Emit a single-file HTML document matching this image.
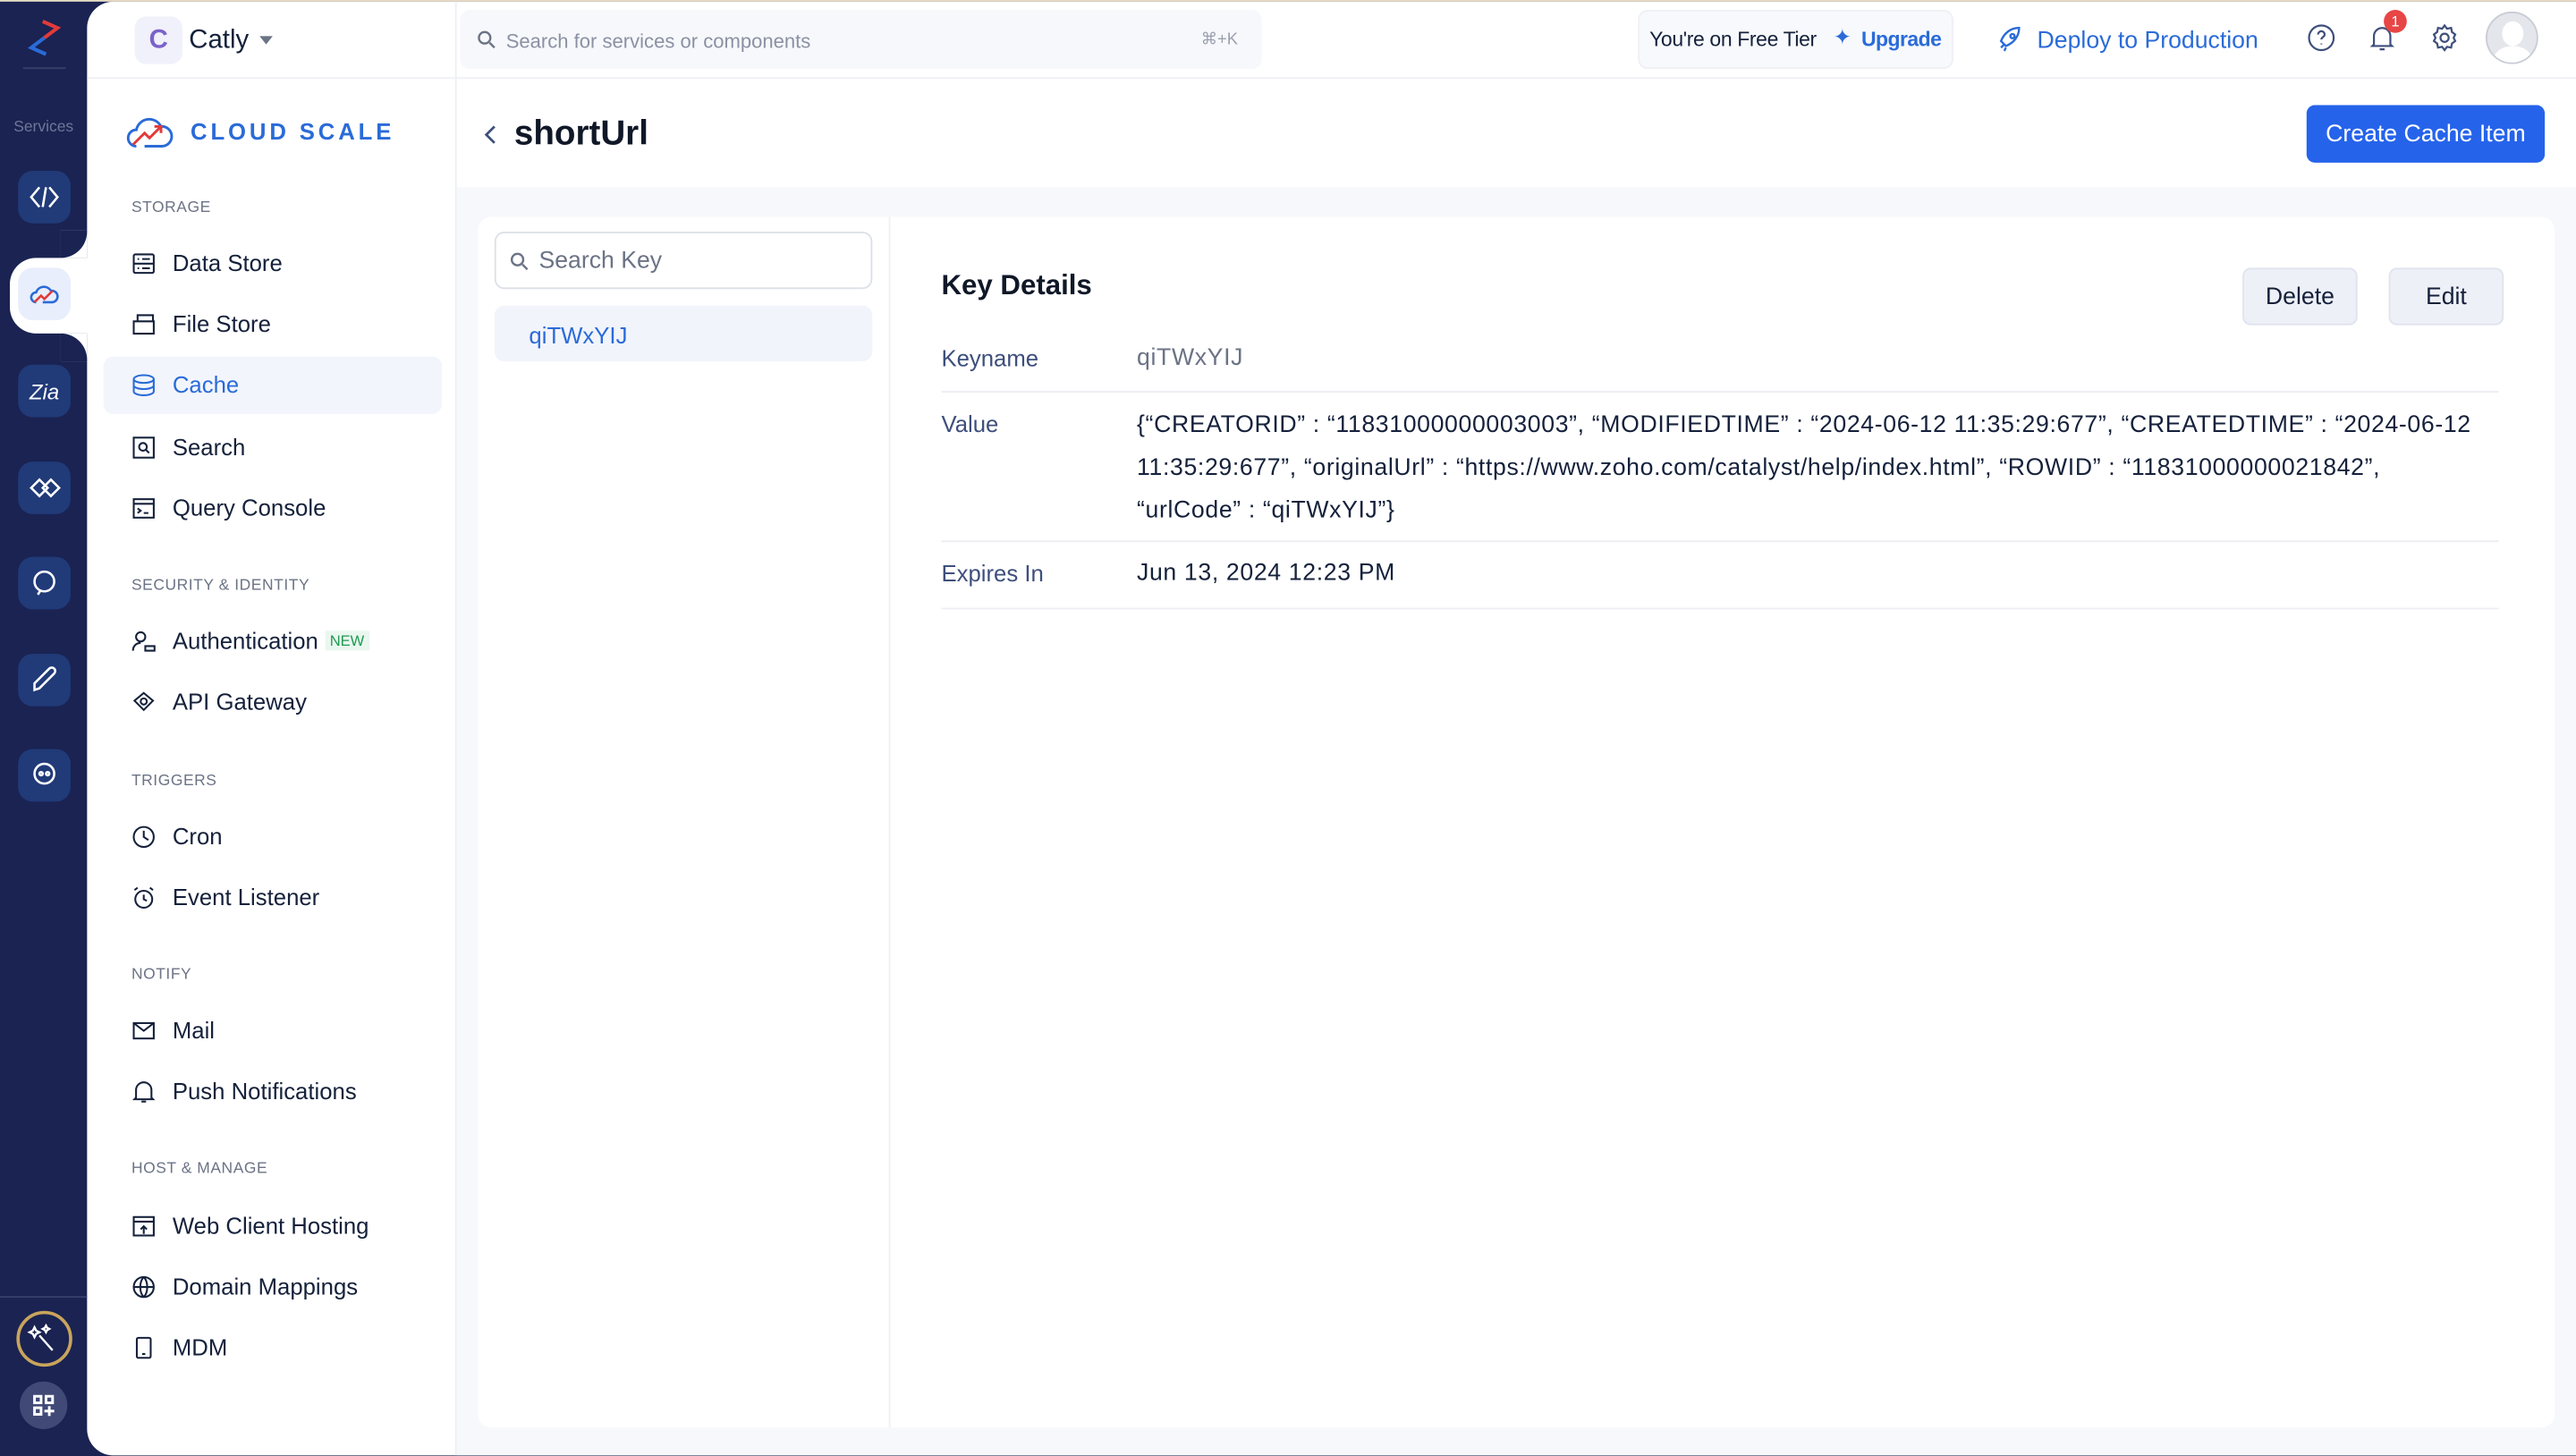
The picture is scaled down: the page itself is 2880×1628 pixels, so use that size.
<!DOCTYPE html>
<html><head><meta charset="utf-8"><style>
*{box-sizing:border-box;margin:0;padding:0}
html,body{width:2880px;height:1628px;overflow:hidden;background:#1a2352}
#s{position:absolute;left:0;top:0;width:1568px;height:886px;transform:scale(1.836735);transform-origin:0 0;font-family:"Liberation Sans",sans-serif;color:#15213b;background:#1a2352}
.a{position:absolute}
.ic{position:absolute;left:11px;width:32px;height:32px;border-radius:9px;background:#213a78;display:flex;align-items:center;justify-content:center}
.nav{position:absolute;left:80px;font-size:14px;color:#15213b;display:flex;align-items:center;margin-top:1px}
.nav svg{width:15px;height:15px;margin-right:10px}
.sec{position:absolute;left:80px;font-size:9.5px;color:#6b7385;letter-spacing:.3px;margin-top:1px}
.lbl{position:absolute;left:573px;font-size:14px;color:#3e4f7c;margin-top:1px}
.val{position:absolute;left:692px;font-size:14.5px;color:#15213b;margin-top:1px;letter-spacing:.35px}
.hr{position:absolute;left:573px;width:948px;height:1px;background:#eceef3}
</style></head><body><div id="s">
<div class="a" style="left:0;top:0;width:1568px;height:1px;background:#e8dcc6"></div>
<svg class="a" style="left:14px;top:10px" width="26" height="26" viewBox="0 0 26 26"><path d="M12 3l9 4-8 6" fill="none" stroke="#e23a3a" stroke-width="2.2"/><path d="M14 23l-9-4 8-6" fill="none" stroke="#2a6bd8" stroke-width="2.2"/></svg>
<div class="a" style="left:14px;top:41px;width:26px;height:1px;background:#36406a"></div>
<div class="a" style="left:0;top:72px;width:53px;text-align:center;font-size:9.5px;color:#6f7797">Services</div>
<div class="a" style="left:53px;top:1px;width:1515px;height:885px;background:#fff;border-radius:16px 0 0 16px"></div>
<div class="a" style="left:6px;top:157px;width:50px;height:46px;background:#fff;border-radius:16px 0 0 16px"></div>
<div class="a" style="left:37px;top:140px;width:16px;height:17px;background:#fff"></div>
<div class="a" style="left:37px;top:140px;width:16px;height:17px;background:#1a2352;border-radius:0 0 16px 0"></div>
<div class="a" style="left:37px;top:203px;width:16px;height:17px;background:#fff"></div>
<div class="a" style="left:37px;top:203px;width:16px;height:17px;background:#1a2352;border-radius:0 16px 0 0"></div>
<div class="ic" style="top:104px"><svg width="20" height="16" viewBox="0 0 20 16" fill="none" stroke="#fff" stroke-width="1.4"><path d="M7 2L2 8l5 6M13 2l5 6-5 6M9 14l2-12"/></svg></div>
<div class="ic" style="top:163px;background:#e8eefb"><svg width="20" height="16" viewBox="0 0 20 16" fill="none" stroke-width="1.4"><path d="M5 13a3 3 0 010-6 5 5 0 019-1 3.5 3.5 0 011 7H9" stroke="#2a6bd8"/><path d="M4 13l4-4 2 2 5-5" stroke="#e23a3a"/></svg></div>
<div class="ic" style="top:222px"><span style="color:#fff;font-size:13px;font-style:italic">Zia</span></div>
<div class="ic" style="top:281px"><svg width="20" height="14" viewBox="0 0 20 14" fill="none" stroke="#fff" stroke-width="1.4"><path d="M2 7l5-5 5 5-5 5zM9 7l5-5 5 5-5 5z"/></svg></div>
<div class="ic" style="top:339px"><svg width="18" height="18" viewBox="0 0 18 18" fill="none" stroke="#fff" stroke-width="1.4"><circle cx="9" cy="8" r="6"/><path d="M5 16l2-3"/></svg></div>
<div class="ic" style="top:398px"><svg width="18" height="18" viewBox="0 0 18 18" fill="none" stroke="#fff" stroke-width="1.4"><path d="M3 15l3-1 9-9a2 2 0 00-3-3L3 11z"/></svg></div>
<div class="ic" style="top:456px"><svg width="18" height="18" viewBox="0 0 18 18" fill="none" stroke="#fff" stroke-width="1.4"><circle cx="9" cy="8" r="6"/><circle cx="7" cy="8" r="1"/><circle cx="11" cy="8" r="1"/></svg></div>
<div class="a" style="left:0;top:789px;width:53px;height:1px;background:#36406a"></div>
<div class="a" style="left:10px;top:798px;width:34px;height:34px;border-radius:50%;border:2px solid #c9a45c"><svg width="30" height="30" viewBox="0 0 30 30" fill="none" stroke="#fff" stroke-width="1.3"><path d="M12 13l8 9"/><path d="M9 8l1 2 2 1-2 1-1 2-1-2-2-1 2-1zM16 7l.7 1.3 1.3.7-1.3.7-.7 1.3-.7-1.3-1.3-.7 1.3-.7z"/></svg></div>
<div class="a" style="left:12px;top:841px;width:29px;height:29px;border-radius:50%;background:#414a76"><svg width="29" height="29" viewBox="0 0 29 29" fill="none" stroke="#fff" stroke-width="1.6"><rect x="9" y="9" width="4" height="4"/><rect x="16" y="9" width="4" height="4"/><rect x="9" y="16" width="4" height="4"/><path d="M18 15v6M15 18h6"/></svg></div>

<div class="a" style="left:277px;top:1px;width:1px;height:885px;background:#eef0f4"></div>
<div class="a" style="left:82px;top:10px;width:29px;height:29px;border-radius:7px;background:#f0f1fb;color:#7b63c9;font-weight:bold;font-size:16px;text-align:center;line-height:29px">C</div>
<div class="a" style="left:115px;top:16px;font-size:16px">Catly</div>
<div class="a" style="left:158px;top:22px;border:4.5px solid transparent;border-top:5px solid #6b7385"></div>
<div class="a" style="left:53px;top:47px;width:1515px;height:1px;background:#eef0f4"></div>
<svg class="a" style="left:76px;top:67px" width="30" height="26" viewBox="0 0 30 26" fill="none" stroke-width="1.6"><path d="M7 22a5 5 0 010-10 8 8 0 0115-2 6 6 0 011 12H12" stroke="#2a6bd8"/><path d="M5 21l7-7 3 3 7-7M18 10h4v4" stroke="#e23a3a"/></svg>
<div class="a" style="left:116px;top:72px;font-size:14px;font-weight:bold;letter-spacing:2.1px;color:#2a6bd8">CLOUD SCALE</div>

<div class="sec" style="top:120px">STORAGE</div>
<div class="nav" style="top:151px"><svg viewBox="0 0 16 16" fill="none" stroke="#15213b" stroke-width="1.2"><rect x="1.5" y="2" width="13" height="12" rx="1"/><path d="M1.5 8h13M4 5h1M4 11h1M7 5h5M7 11h5"/></svg>Data Store</div>
<div class="nav" style="top:188px"><svg viewBox="0 0 16 16" fill="none" stroke="#15213b" stroke-width="1.2"><path d="M1.5 6h13v8h-13zM4 6V2h10v4"/></svg>File Store</div>
<div class="a" style="left:63px;top:217px;width:206px;height:35px;border-radius:6px;background:#f2f5fc"></div>
<div class="nav" style="top:225px;color:#2a6bd8"><svg viewBox="0 0 16 16" fill="none" stroke="#2a6bd8" stroke-width="1.2"><ellipse cx="8" cy="4" rx="6.5" ry="2.5"/><path d="M1.5 4v8c0 1.4 2.9 2.5 6.5 2.5s6.5-1.1 6.5-2.5V4M1.5 8c0 1.4 2.9 2.5 6.5 2.5s6.5-1.1 6.5-2.5"/></svg>Cache</div>
<div class="nav" style="top:263px"><svg viewBox="0 0 16 16" fill="none" stroke="#15213b" stroke-width="1.2"><rect x="1.5" y="1.5" width="13" height="13"/><circle cx="7.5" cy="7.5" r="2.5"/><path d="M9.5 9.5l2 2"/></svg>Search</div>
<div class="nav" style="top:300px"><svg viewBox="0 0 16 16" fill="none" stroke="#15213b" stroke-width="1.2"><rect x="1.5" y="2" width="13" height="12"/><path d="M1.5 5h13M4 8l2 1.5L4 11M8 11h3"/></svg>Query Console</div>

<div class="sec" style="top:350px">SECURITY &amp; IDENTITY</div>
<div class="nav" style="top:381px"><svg viewBox="0 0 16 16" fill="none" stroke="#15213b" stroke-width="1.2"><circle cx="6" cy="5" r="3"/><path d="M1 14c0-3 2-5 5-5M9 11h6v3H9z"/></svg>Authentication<span style="font-size:9px;color:#1f9a53;background:#eaf7ef;padding:1px 3px;margin-left:4px">NEW</span></div>
<div class="nav" style="top:418px"><svg viewBox="0 0 16 16" fill="none" stroke="#15213b" stroke-width="1.2"><path d="M8 2l6 5-6 6-6-6z"/><circle cx="8" cy="7.5" r="2"/></svg>API Gateway</div>

<div class="sec" style="top:469px">TRIGGERS</div>
<div class="nav" style="top:500px"><svg viewBox="0 0 16 16" fill="none" stroke="#15213b" stroke-width="1.2"><circle cx="8" cy="8" r="6.5"/><path d="M8 4v4l3 2"/></svg>Cron</div>
<div class="nav" style="top:537px"><svg viewBox="0 0 16 16" fill="none" stroke="#15213b" stroke-width="1.2"><circle cx="8" cy="9" r="5.5"/><path d="M8 6v3l2 1M2 3l2-1.5M14 3l-2-1.5"/></svg>Event Listener</div>

<div class="sec" style="top:587px">NOTIFY</div>
<div class="nav" style="top:618px"><svg viewBox="0 0 16 16" fill="none" stroke="#15213b" stroke-width="1.2"><rect x="1.5" y="3" width="13" height="10"/><path d="M1.5 3l6.5 5 6.5-5"/></svg>Mail</div>
<div class="nav" style="top:655px"><svg viewBox="0 0 16 16" fill="none" stroke="#15213b" stroke-width="1.2"><path d="M3 12V7a5 5 0 0110 0v5l1 1H2zM6.5 14.5h3"/></svg>Push Notifications</div>

<div class="sec" style="top:705px">HOST &amp; MANAGE</div>
<div class="nav" style="top:737px"><svg viewBox="0 0 16 16" fill="none" stroke="#15213b" stroke-width="1.2"><rect x="1.5" y="2" width="13" height="12"/><path d="M1.5 5h13M8 13V8M6 10l2-2 2 2"/></svg>Web Client Hosting</div>
<div class="nav" style="top:774px"><svg viewBox="0 0 16 16" fill="none" stroke="#15213b" stroke-width="1.2"><circle cx="8" cy="8" r="6.5"/><path d="M1.5 8h13M8 1.5c-3 3-3 10 0 13M8 1.5c3 3 3 10 0 13"/></svg>Domain Mappings</div>
<div class="nav" style="top:811px"><svg viewBox="0 0 16 16" fill="none" stroke="#15213b" stroke-width="1.2"><rect x="3.5" y="1.5" width="9" height="13" rx="1"/><path d="M7 12h2"/></svg>MDM</div>

<div class="a" style="left:280px;top:6px;width:488px;height:36px;border-radius:6px;background:#f7f8fb"></div>
<svg class="a" style="left:290px;top:18px" width="12" height="12" viewBox="0 0 12 12" fill="none" stroke="#6b7385" stroke-width="1.3"><circle cx="5" cy="5" r="3.5"/><path d="M8 8l3 3"/></svg>
<div class="a" style="left:308px;top:18px;font-size:12px;color:#8a91a3">Search for services or components</div>
<div class="a" style="left:731px;top:19px;font-size:10px;color:#9aa0ae">⌘+K</div>
<div class="a" style="left:997px;top:6px;width:192px;height:36px;border-radius:6px;background:#f7f9fc;border:1px solid #eef0f4"></div>
<div class="a" style="left:1004px;top:17px;font-size:12.5px;color:#15213b;letter-spacing:-.2px">You're on Free Tier</div>
<div class="a" style="left:1116px;top:15px;font-size:13px;color:#2a6bd8">✦</div>
<div class="a" style="left:1133px;top:17px;font-size:12.5px;font-weight:bold;color:#2a6bd8;letter-spacing:-.3px">Upgrade</div>
<svg class="a" style="left:1215px;top:16px" width="16" height="16" viewBox="0 0 16 16" fill="none" stroke="#2a6bd8" stroke-width="1.3"><path d="M5 11l-2-2c2-5 6-8 11-8 0 5-3 9-8 11zM3 13l2-2M5 15l1-2"/><circle cx="10" cy="6" r="1.3"/></svg>
<div class="a" style="left:1240px;top:17px;font-size:14.5px;color:#2a6bd8">Deploy to Production</div>
<svg class="a" style="left:1404px;top:14px" width="18" height="18" viewBox="0 0 18 18" fill="none" stroke="#3e4f7c" stroke-width="1.2"><circle cx="9" cy="9" r="7.5"/><path d="M7 7a2 2 0 114 0c0 1.5-2 1.5-2 3M9 12.5v.5"/></svg>
<svg class="a" style="left:1441px;top:14px" width="18" height="18" viewBox="0 0 18 18" fill="none" stroke="#3e4f7c" stroke-width="1.2"><path d="M4 13V8a5 5 0 0110 0v5l1 1H3zM7.5 16h3"/></svg>
<div class="a" style="left:1451px;top:6px;width:14px;height:14px;border-radius:50%;background:#e84545;color:#fff;font-size:9px;text-align:center;line-height:14px">1</div>
<svg class="a" style="left:1479px;top:14px" width="18" height="18" viewBox="0 0 18 18" fill="none" stroke="#3e4f7c" stroke-width="1.2"><circle cx="9" cy="9" r="2.5"/><path d="M9 1.5l1.5 2 2.5-.5.5 2.5 2 1.5-1 2 1 2-2 1.5-.5 2.5-2.5-.5L9 16.5l-1.5-2-2.5.5-.5-2.5-2-1.5 1-2-1-2 2-1.5.5-2.5 2.5.5z"/></svg>
<div class="a" style="left:1513px;top:7px;width:32px;height:32px;border-radius:50%;background:#e4e6ec;border:1px solid #c9ccd4;overflow:hidden"><div class="a" style="left:9px;top:5px;width:13px;height:15px;border-radius:50%;background:#fff"></div><div class="a" style="left:4px;top:20px;width:23px;height:16px;border-radius:50%;background:#fff"></div></div>

<div class="a" style="left:278px;top:114px;width:1290px;height:772px;background:#f7f8fb"></div>
<svg class="a" style="left:293px;top:75px" width="12" height="14" viewBox="0 0 12 14" fill="none" stroke="#3e4f7c" stroke-width="1.5"><path d="M8 2L3 7l5 5"/></svg>
<div class="a" style="left:313px;top:70px;font-size:21px;font-weight:bold;color:#101828">shortUrl</div>
<div class="a" style="left:1404px;top:64px;width:145px;height:35px;border-radius:5px;background:#2563eb;color:#fff;font-size:14.5px;text-align:center;line-height:36px">Create Cache Item</div>

<div class="a" style="left:291px;top:132px;width:1264px;height:737px;background:#fff;border-radius:8px"></div>
<div class="a" style="left:541px;top:132px;width:1px;height:737px;background:#f0f1f4"></div>
<div class="a" style="left:301px;top:141px;width:230px;height:35px;border:1px solid #dde0e8;border-radius:6px"></div>
<svg class="a" style="left:310px;top:153px" width="12" height="12" viewBox="0 0 12 12" fill="none" stroke="#6b7385" stroke-width="1.3"><circle cx="5" cy="5" r="3.5"/><path d="M8 8l3 3"/></svg>
<div class="a" style="left:328px;top:151px;font-size:14.5px;color:#6b7385">Search Key</div>
<div class="a" style="left:301px;top:186px;width:230px;height:34px;border-radius:6px;background:#f2f4fb"></div>
<div class="a" style="left:322px;top:196px;font-size:14px;color:#2a6bd8">qiTWxYIJ</div>

<div class="a" style="left:573px;top:164px;font-size:17px;font-weight:bold;color:#101828">Key Details</div>
<div class="a" style="left:1365px;top:163px;width:70px;height:35px;border-radius:5px;background:#eef0f7;border:1px solid #dfe3ee;font-size:14.5px;text-align:center;line-height:34px">Delete</div>
<div class="a" style="left:1454px;top:163px;width:70px;height:35px;border-radius:5px;background:#eef0f7;border:1px solid #dfe3ee;font-size:14.5px;text-align:center;line-height:34px">Edit</div>

<div class="lbl" style="top:209px">Keyname</div>
<div class="val" style="top:209px;color:#6b7385">qiTWxYIJ</div>
<div class="hr" style="top:238px"></div>
<div class="lbl" style="top:249px">Value</div>
<div class="val" style="top:245px;line-height:26px;white-space:nowrap">{“CREATORID” : “11831000000003003”, “MODIFIEDTIME” : “2024-06-12 11:35:29:677”, “CREATEDTIME” : “2024-06-12<br>11:35:29:677”, “originalUrl” : “https://www.zoho.com/catalyst/help/index.html”, “ROWID” : “11831000000021842”,<br>“urlCode” : “qiTWxYIJ”}</div>
<div class="hr" style="top:329px"></div>
<div class="lbl" style="top:340px">Expires In</div>
<div class="val" style="top:340px">Jun 13, 2024 12:23 PM</div>
<div class="hr" style="top:370px"></div>
</div></body></html>
